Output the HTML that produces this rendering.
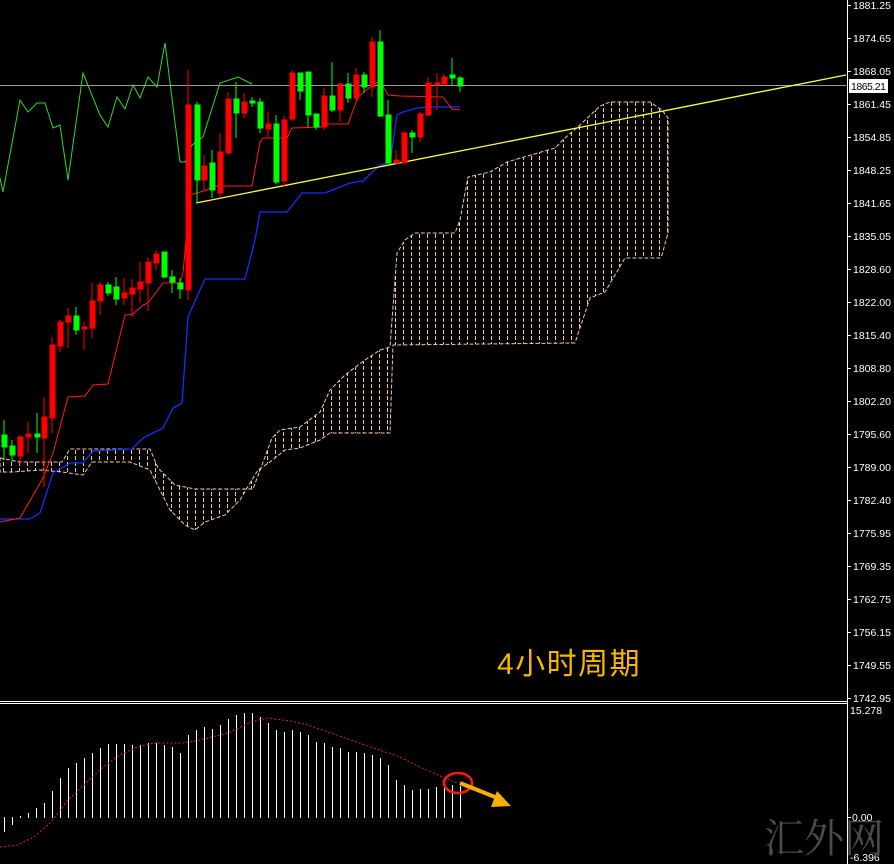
<!DOCTYPE html>
<html><head><meta charset="utf-8"><style>
html,body{margin:0;padding:0;background:#000;}
svg{display:block;}
.ax{font-family:"Liberation Sans",sans-serif;font-size:10.5px;fill:#fff;}
</style></head><body>
<svg width="894" height="864" viewBox="0 0 894 864" xmlns="http://www.w3.org/2000/svg">
<defs>
<pattern id="cl" width="8" height="6" patternUnits="userSpaceOnUse"><rect x="3" y="0" width="1" height="4" fill="#f2caa6"/></pattern>
<clipPath id="mc"><rect x="0" y="0" width="846" height="700"/></clipPath>
</defs>
<rect width="894" height="864" fill="#000"/>
<g clip-path="url(#mc)">
<polygon fill="url(#cl)" stroke="#f2caa6" stroke-width="1" stroke-dasharray="4 2" points="0,458 20,462 62,462 70,449 150,449 158,468 175,485 195,489 253,489 262,465 272,438 280,430 300,427 320,412 330,390 345,375 365,360 380,350 390,347 397,253 405,240 415,233 455,233 460,220 468,177 490,172 507,162 555,148 565,138 580,125 600,106 610,102 650,102 662,110 668,118 668,233 662,255 660,258 625,258 615,275 605,292 590,298 575,343 393,345 390,433 330,433 320,440 300,448 285,450 270,462 258,470 250,483 240,500 225,515 205,522 195,530 185,525 170,510 160,490 150,470 130,462 92,462 83,475 62,472 40,470 13,472 0,472"/>
<line x1="0" y1="85.5" x2="846" y2="85.5" stroke="#9a9a9a" stroke-width="1"/>
<polyline fill="none" stroke="#2fd82f" stroke-width="1" points="0,178 3,192 20,100 28,112 37,103 45,103 53,128 60,125 68,180 83,73 100,115 108,127 117,97 125,109 133,85 140,98 148,77 157,87 165,43 180,162 185,162 192,145 203,137 220,83 238,77 252,84"/>
<polyline fill="none" stroke="#1030ff" stroke-width="1.3" points="0,519 30,519 40,513 53,473 70,463 83,463 93,451 132,449 143,438 163,428 173,408 182,403 188,317 200,290 205,279 245,279 255,240 260,212 287,212 302,193 325,193 350,183 363,181 380,165 390,163 397,115 403,112 417,108 430,107 460,107"/>
<polyline fill="none" stroke="#ff1a1a" stroke-width="1" points="0,522 20,518 43,478 53,453 68,397 85,396 93,385 108,384 125,315 133,314 143,305 148,303 163,283 180,283 183,273 190,195 207,190 213,186 252,186 260,142 263,138 287,138 292,128 323,127 328,124 348,124 358,97 370,87 380,81 388,95 400,96 443,97 452,109 460,110"/>
<line x1="196" y1="203" x2="846" y2="75" stroke="#ffff40" stroke-width="1.3"/>
<g stroke-width="1">
<g fill="#00ff00" stroke="#00ff00">
<line x1="4" y1="420" x2="4" y2="460"/><rect x="2" y="435" width="5" height="12"/>
<line x1="12" y1="440" x2="12" y2="462"/><rect x="10" y="446" width="5" height="9"/>
<line x1="37" y1="413" x2="37" y2="453"/><rect x="35" y="434" width="5" height="3"/>
<line x1="76" y1="307" x2="76" y2="335"/><rect x="74" y="316" width="5" height="14"/>
<line x1="108" y1="282" x2="108" y2="296"/><rect x="106" y="285" width="5" height="8"/>
<line x1="116" y1="277" x2="116" y2="305"/><rect x="114" y="287" width="5" height="12"/>
<line x1="164" y1="252" x2="164" y2="278"/><rect x="162" y="252" width="5" height="25"/>
<line x1="172" y1="270" x2="172" y2="293"/><rect x="170" y="277" width="5" height="5"/>
<line x1="180" y1="278" x2="180" y2="299"/><rect x="178" y="283" width="5" height="6"/>
<line x1="197" y1="102" x2="197" y2="203"/><rect x="195" y="105" width="5" height="75"/>
<line x1="212" y1="150" x2="212" y2="198"/><rect x="210" y="163" width="5" height="27"/>
<line x1="236" y1="82" x2="236" y2="138"/><rect x="234" y="99" width="5" height="14"/>
<line x1="252" y1="97" x2="252" y2="107"/><rect x="250" y="101" width="5" height="2"/>
<line x1="260" y1="98" x2="260" y2="133"/><rect x="258" y="102" width="5" height="26"/>
<line x1="276" y1="115" x2="276" y2="184"/><rect x="274" y="124" width="5" height="58"/>
<line x1="300" y1="73" x2="300" y2="100"/><rect x="298" y="73" width="5" height="18"/>
<line x1="308" y1="72" x2="308" y2="127"/><rect x="306" y="72" width="5" height="43"/>
<line x1="316" y1="114" x2="316" y2="130"/><rect x="314" y="114" width="5" height="13"/>
<line x1="332" y1="62" x2="332" y2="112"/><rect x="330" y="96" width="5" height="14"/>
<line x1="348" y1="73" x2="348" y2="103"/><rect x="346" y="84" width="5" height="14"/>
<line x1="364" y1="72" x2="364" y2="93"/><rect x="362" y="75" width="5" height="12"/>
<line x1="380" y1="30" x2="380" y2="117"/><rect x="378" y="42" width="5" height="74"/>
<line x1="388" y1="100" x2="388" y2="163"/><rect x="386" y="115" width="5" height="48"/>
<line x1="412" y1="130" x2="412" y2="153"/><rect x="410" y="133" width="5" height="4"/>
<line x1="452" y1="58" x2="452" y2="85"/><rect x="450" y="75" width="5" height="3"/>
<line x1="460" y1="76" x2="460" y2="92"/><rect x="458" y="78" width="5" height="8"/>
</g>
<g fill="#ff0000" stroke="#ff0000">
<line x1="20" y1="435" x2="20" y2="465"/><rect x="18" y="437" width="5" height="19"/>
<line x1="28" y1="422" x2="28" y2="453"/><rect x="26" y="434" width="5" height="3"/>
<line x1="44" y1="397" x2="44" y2="487"/><rect x="42" y="417" width="5" height="21"/>
<line x1="52" y1="337" x2="52" y2="433"/><rect x="50" y="345" width="5" height="73"/>
<line x1="60" y1="320" x2="60" y2="352"/><rect x="58" y="322" width="5" height="24"/>
<line x1="68" y1="308" x2="68" y2="348"/><rect x="66" y="316" width="5" height="6"/>
<line x1="84" y1="322" x2="84" y2="350"/><rect x="82" y="327" width="5" height="2"/>
<line x1="92" y1="283" x2="92" y2="338"/><rect x="90" y="301" width="5" height="27"/>
<line x1="100" y1="282" x2="100" y2="315"/><rect x="98" y="285" width="5" height="16"/>
<line x1="124" y1="278" x2="124" y2="305"/><rect x="122" y="293" width="5" height="5"/>
<line x1="132" y1="279" x2="132" y2="317"/><rect x="130" y="288" width="5" height="6"/>
<line x1="140" y1="262" x2="140" y2="303"/><rect x="138" y="282" width="5" height="7"/>
<line x1="148" y1="257" x2="148" y2="311"/><rect x="146" y="262" width="5" height="21"/>
<line x1="156" y1="250" x2="156" y2="270"/><rect x="154" y="254" width="5" height="9"/>
<line x1="188" y1="70" x2="188" y2="300"/><rect x="186" y="105" width="5" height="185"/>
<line x1="204" y1="155" x2="204" y2="190"/><rect x="202" y="166" width="5" height="14"/>
<line x1="220" y1="133" x2="220" y2="197"/><rect x="218" y="152" width="5" height="41"/>
<line x1="228" y1="92" x2="228" y2="155"/><rect x="226" y="99" width="5" height="54"/>
<line x1="244" y1="93" x2="244" y2="118"/><rect x="242" y="102" width="5" height="11"/>
<line x1="268" y1="112" x2="268" y2="137"/><rect x="266" y="124" width="5" height="5"/>
<line x1="284" y1="116" x2="284" y2="187"/><rect x="282" y="120" width="5" height="61"/>
<line x1="292" y1="70" x2="292" y2="121"/><rect x="290" y="73" width="5" height="46"/>
<line x1="324" y1="88" x2="324" y2="130"/><rect x="322" y="96" width="5" height="31"/>
<line x1="340" y1="83" x2="340" y2="122"/><rect x="338" y="84" width="5" height="26"/>
<line x1="356" y1="68" x2="356" y2="103"/><rect x="354" y="75" width="5" height="23"/>
<line x1="372" y1="37" x2="372" y2="97"/><rect x="370" y="42" width="5" height="45"/>
<line x1="396" y1="150" x2="396" y2="164"/><rect x="394" y="160" width="5" height="3"/>
<line x1="404" y1="131" x2="404" y2="164"/><rect x="402" y="133" width="5" height="30"/>
<line x1="420" y1="112" x2="420" y2="142"/><rect x="418" y="114" width="5" height="23"/>
<line x1="428" y1="77" x2="428" y2="116"/><rect x="426" y="83" width="5" height="32"/>
<line x1="437" y1="73" x2="437" y2="110"/><rect x="435" y="83" width="5" height="2"/>
<line x1="444" y1="74" x2="444" y2="86"/><rect x="442" y="77" width="5" height="7"/>
</g>
</g>
<text x="497" y="674" font-family="'Liberation Sans','Noto Sans CJK SC',sans-serif" font-size="30" letter-spacing="1.5" fill="#f7b800">4小时周期</text>
</g>
<line x1="847.5" y1="0" x2="847.5" y2="864" stroke="#fff" stroke-width="1"/>
<line x1="0" y1="701.5" x2="847" y2="701.5" stroke="#fff"/>
<line x1="0" y1="703.5" x2="847" y2="703.5" stroke="#fff"/>
<g class="ax">
<text x="853" y="9">1881.25</text>
<text x="853" y="42">1874.65</text>
<text x="853" y="75">1868.05</text>
<text x="853" y="108">1861.45</text>
<text x="853" y="141">1854.85</text>
<text x="853" y="174">1848.25</text>
<text x="853" y="207">1841.65</text>
<text x="853" y="240">1835.05</text>
<text x="853" y="273">1828.60</text>
<text x="853" y="306">1822.00</text>
<text x="853" y="339">1815.40</text>
<text x="853" y="372">1808.80</text>
<text x="853" y="405">1802.20</text>
<text x="853" y="438">1795.60</text>
<text x="853" y="471">1789.00</text>
<text x="853" y="504">1782.40</text>
<text x="853" y="537">1775.95</text>
<text x="853" y="570">1769.35</text>
<text x="853" y="603">1762.75</text>
<text x="853" y="636">1756.15</text>
<text x="853" y="669">1749.55</text>
<text x="853" y="702">1742.95</text>
<text x="850" y="714">15.278</text>
<text x="852" y="821">0.00</text>
<text x="850" y="861">-6.396</text>
</g>
<g stroke="#fff">
<line x1="847" y1="5.5" x2="851" y2="5.5"/><line x1="847" y1="38.5" x2="851" y2="38.5"/><line x1="847" y1="71.5" x2="851" y2="71.5"/><line x1="847" y1="104.5" x2="851" y2="104.5"/><line x1="847" y1="137.5" x2="851" y2="137.5"/><line x1="847" y1="170.5" x2="851" y2="170.5"/><line x1="847" y1="203.5" x2="851" y2="203.5"/><line x1="847" y1="236.5" x2="851" y2="236.5"/><line x1="847" y1="269.5" x2="851" y2="269.5"/><line x1="847" y1="302.5" x2="851" y2="302.5"/><line x1="847" y1="335.5" x2="851" y2="335.5"/><line x1="847" y1="368.5" x2="851" y2="368.5"/><line x1="847" y1="401.5" x2="851" y2="401.5"/><line x1="847" y1="434.5" x2="851" y2="434.5"/><line x1="847" y1="467.5" x2="851" y2="467.5"/><line x1="847" y1="500.5" x2="851" y2="500.5"/><line x1="847" y1="533.5" x2="851" y2="533.5"/><line x1="847" y1="566.5" x2="851" y2="566.5"/><line x1="847" y1="599.5" x2="851" y2="599.5"/><line x1="847" y1="632.5" x2="851" y2="632.5"/><line x1="847" y1="665.5" x2="851" y2="665.5"/><line x1="847" y1="698.5" x2="851" y2="698.5"/><line x1="847" y1="817.5" x2="851" y2="817.5"/>
</g>
<rect x="849" y="79" width="39" height="14" fill="#fff"/>
<text x="851" y="90" font-family="'Liberation Sans',sans-serif" font-size="10.5" textLength="35" fill="#000">1865.21</text>
<g stroke="#fff" stroke-width="1">
<line x1="4.5" y1="817" x2="4.5" y2="832"/><line x1="12.5" y1="817" x2="12.5" y2="825"/>
<line x1="20.5" y1="816" x2="20.5" y2="818"/><line x1="28.5" y1="813" x2="28.5" y2="818"/>
<line x1="36.5" y1="808" x2="36.5" y2="818"/><line x1="44.5" y1="803" x2="44.5" y2="818"/>
<line x1="52.5" y1="791" x2="52.5" y2="818"/><line x1="60.5" y1="778" x2="60.5" y2="818"/>
<line x1="68.5" y1="768" x2="68.5" y2="818"/><line x1="76.5" y1="763" x2="76.5" y2="818"/>
<line x1="84.5" y1="758" x2="84.5" y2="818"/><line x1="92.5" y1="753" x2="92.5" y2="818"/>
<line x1="100.5" y1="748" x2="100.5" y2="818"/><line x1="108.5" y1="744" x2="108.5" y2="818"/>
<line x1="116.5" y1="744" x2="116.5" y2="818"/><line x1="124.5" y1="744" x2="124.5" y2="818"/>
<line x1="132.5" y1="745" x2="132.5" y2="818"/><line x1="140.5" y1="745" x2="140.5" y2="818"/>
<line x1="148.5" y1="743" x2="148.5" y2="818"/><line x1="156.5" y1="743" x2="156.5" y2="818"/>
<line x1="164.5" y1="745" x2="164.5" y2="818"/><line x1="172.5" y1="747" x2="172.5" y2="818"/>
<line x1="180.5" y1="753" x2="180.5" y2="818"/><line x1="188.5" y1="735" x2="188.5" y2="818"/>
<line x1="196.5" y1="730" x2="196.5" y2="818"/><line x1="204.5" y1="727" x2="204.5" y2="818"/>
<line x1="212.5" y1="729" x2="212.5" y2="818"/><line x1="220.5" y1="725" x2="220.5" y2="818"/>
<line x1="228.5" y1="719" x2="228.5" y2="818"/><line x1="236.5" y1="715" x2="236.5" y2="818"/>
<line x1="244.5" y1="713" x2="244.5" y2="818"/><line x1="252.5" y1="713" x2="252.5" y2="818"/>
<line x1="260.5" y1="717" x2="260.5" y2="818"/><line x1="268.5" y1="723" x2="268.5" y2="818"/>
<line x1="276.5" y1="730" x2="276.5" y2="818"/><line x1="284.5" y1="732" x2="284.5" y2="818"/>
<line x1="292.5" y1="730" x2="292.5" y2="818"/><line x1="300.5" y1="732" x2="300.5" y2="818"/>
<line x1="308.5" y1="735" x2="308.5" y2="818"/><line x1="316.5" y1="742" x2="316.5" y2="818"/>
<line x1="324.5" y1="743" x2="324.5" y2="818"/><line x1="332.5" y1="747" x2="332.5" y2="818"/>
<line x1="340.5" y1="748" x2="340.5" y2="818"/><line x1="348.5" y1="752" x2="348.5" y2="818"/>
<line x1="356.5" y1="752" x2="356.5" y2="818"/><line x1="364.5" y1="753" x2="364.5" y2="818"/>
<line x1="372.5" y1="755" x2="372.5" y2="818"/><line x1="380.5" y1="758" x2="380.5" y2="818"/>
<line x1="388.5" y1="765" x2="388.5" y2="818"/><line x1="396.5" y1="780" x2="396.5" y2="818"/>
<line x1="404.5" y1="785" x2="404.5" y2="818"/><line x1="412.5" y1="790" x2="412.5" y2="818"/>
<line x1="420.5" y1="789" x2="420.5" y2="818"/><line x1="428.5" y1="789" x2="428.5" y2="818"/>
<line x1="436.5" y1="787" x2="436.5" y2="818"/><line x1="444.5" y1="783" x2="444.5" y2="818"/>
<line x1="452.5" y1="785" x2="452.5" y2="818"/><line x1="460.5" y1="786" x2="460.5" y2="818"/>
</g>
<polyline fill="none" stroke="#e02020" stroke-width="1" stroke-dasharray="2 2" points="0,847 17,845 34,837 51,822 68,800 86,783 103,767 120,755 137,747 154,743 183,743 200,740 228,733 251,722 268,718 291,721 308,725 331,733 365,745 400,757 422,768 445,778 457,783"/>
<ellipse cx="458" cy="783" rx="14" ry="10" fill="none" stroke="#ff1818" stroke-width="2.5"/>
<line x1="460" y1="783" x2="500" y2="799" stroke="#f5b000" stroke-width="4"/>
<polygon points="497,791 511,806 491,807" fill="#f5b000"/>
<text x="764" y="852" font-family="'Noto Serif CJK SC','Liberation Serif',serif" font-size="40" fill="#4c4c4c">汇外网</text>
</svg>
</body></html>
